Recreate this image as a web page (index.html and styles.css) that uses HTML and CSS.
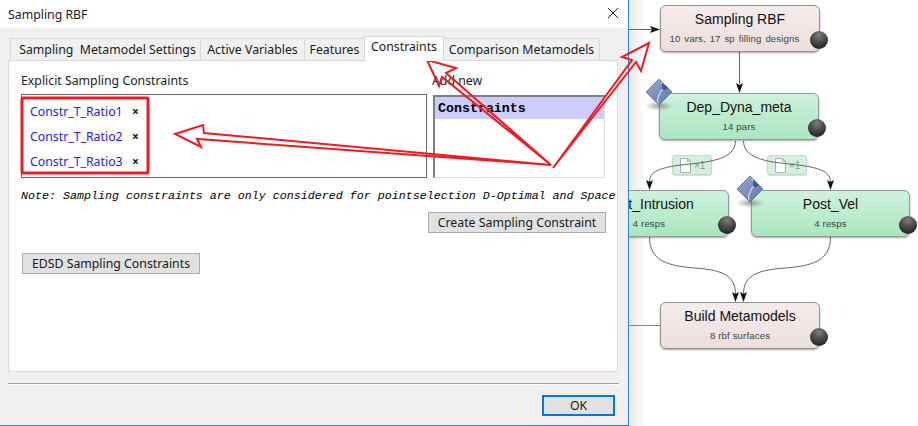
FILE: index.html
```html
<!DOCTYPE html>
<html lang="en">
<head>
<meta charset="utf-8">
<title>Sampling RBF</title>
<link rel="stylesheet" href="styles.css">
</head>
<body>
<div class="stage">
  <div class="canvas">
    <div class="edge-label label-a"><svg class="doc" viewBox="0 0 11 15"><path d="M.5.5h7l3 3v11H.5zM7.5.5v3h3" fill="#fff" stroke="#a5b5aa"/></svg><span>×1</span></div>
    <div class="edge-label label-b"><svg class="doc" viewBox="0 0 11 15"><path d="M.5.5h7l3 3v11H.5zM7.5.5v3h3" fill="#fff" stroke="#a5b5aa"/></svg><span>×1</span></div>
    <svg class="edges" viewBox="0 0 918 426">
      <g fill="none" stroke="#666">
        <path d="M0 29.5H652"/>
        <path d="M739.5 52V84"/>
        <path d="M735.5 141C735 155 722 161 690 164S649.5 172 649.5 182"/>
        <path d="M743.5 141C744 155 757 161 789 164S830.5 172 830.5 182"/>
        <path d="M649.5 237C649.5 262 670 266 695 268S735.5 274 735.5 294"/>
        <path d="M830.5 237C830.5 262 810 266 785 268S743.5 274 743.5 294"/>
        <path d="M0 325.5H660" stroke="#888"/>
      </g>
      <g fill="#111">
        <path d="M660 29.5L650 26L652 29.5L650 33z"/>
        <path d="M739.5 93L736 83L739.5 85L743 83z"/>
        <path d="M649.5 190L646 180L649.5 182L653 180z"/>
        <path d="M830.5 190L827 180L830.5 182L834 180z"/>
        <path d="M735.5 302L732 292L735.5 294L739 292z"/>
        <path d="M743.5 302L740 292L743.5 294L747 292z"/>
      </g>
    </svg>
    <div class="node node-pink n-sampling"><b>Sampling RBF</b><small class="sub-long">10 vars, 17 sp filling designs</small><i class="ball"></i></div>
    <div class="node node-green n-dep"><b>Dep_Dyna_meta</b><small>14 pars</small><i class="ball"></i></div>
    <div class="node node-green n-intrusion"><b>Post_Intrusion</b><small>4 resps</small><i class="ball"></i></div>
    <div class="node node-green n-post"><b>Post_Vel</b><small>4 resps</small><i class="ball"></i></div>
    <div class="node node-pink n-build"><b>Build Metamodels</b><small>8 rbf surfaces</small><i class="ball"></i></div>
    <svg class="diamond d-dep" viewBox="0 0 28 34"><defs><linearGradient id="dg" x1="0" y1="0" x2="1" y2="1"><stop offset="0" stop-color="#9aa9cf"/><stop offset="1" stop-color="#6076a9"/></linearGradient><radialGradient id="ds"><stop offset="0" stop-color="#666" stop-opacity=".65"/><stop offset="1" stop-color="#777" stop-opacity="0"/></radialGradient></defs><ellipse cx="14" cy="28" rx="14" ry="5" fill="url(#ds)"/><path d="M14 1L27 14 14 27 1 14z" fill="url(#dg)" stroke="#6c7ea8"/><path d="M16 4C18 7 21 9 19 11S15 12 15 15 11 18 13 25" fill="none" stroke="#cfd7ea" stroke-width="1.3"/><path d="M17 5L23 10 19 13 17 10z" fill="#3f5a96"/></svg>
    <svg class="diamond d-post" viewBox="0 0 28 34"><ellipse cx="14" cy="28" rx="14" ry="5" fill="url(#ds)"/><path d="M14 1L27 14 14 27 1 14z" fill="url(#dg)" stroke="#6c7ea8"/><path d="M16 4C18 7 21 9 19 11S15 12 15 15 11 18 13 25" fill="none" stroke="#cfd7ea" stroke-width="1.3"/><path d="M17 5L23 10 19 13 17 10z" fill="#3f5a96"/></svg>
  </div>

  <div class="dialog">
    <div class="titlebar">
      <span>Sampling RBF</span>
      <svg class="close" viewBox="0 0 10 10"><path d="M0 0L10 10M10 0L0 10" stroke="#222" fill="none"/></svg>
    </div>
    <div class="dialog-body">
      <div class="tabs">
        <div class="tab tab-first">Sampling&nbsp; Metamodel Settings</div>
        <div class="tab tab-vars">Active Variables</div>
        <div class="tab tab-features">Features</div>
        <div class="tab tab-active">Constraints</div>
        <div class="tab tab-compare">Comparison Metamodels</div>
      </div>
      <div class="pane">
        <div class="columns">
          <div class="col-left">
            <div class="heading">Explicit Sampling Constraints</div>
            <div class="list-box">
              <div class="item"><a>Constr_T_Ratio1</a><span>×</span></div>
              <div class="item"><a>Constr_T_Ratio2</a><span>×</span></div>
              <div class="item"><a>Constr_T_Ratio3</a><span>×</span></div>
            </div>
          </div>
          <div class="col-right">
            <div class="heading heading-add">Add new</div>
            <div class="table-box"><div class="table-head">Constraints</div></div>
          </div>
        </div>
        <p class="note">Note: Sampling constraints are only considered for pointselection D-Optimal and Space</p>
        <div class="create-row"><button class="btn btn-wide">Create Sampling Constraint</button></div>
        <button class="btn btn-wide btn-edsd">EDSD Sampling Constraints</button>
      </div>
      <div class="separator"></div>
      <div class="footer"><button class="btn btn-ok">OK</button></div>
    </div>
  </div>

  <svg class="annotations" viewBox="0 0 918 426">
    <g fill="none" stroke="#ed1c24" stroke-width="2">
      <rect x="22" y="98" width="126" height="75" rx="1" stroke-width="3"/>
      <path d="M551 165L204 133L203 125L175 134L201 147L197 139Z"/>
      <path d="M551 165L446 73L456 68L427 60L439 86L442 77Z"/>
      <path d="M553 168L632 60L622 57L649 43L641 71L636 62Z"/>
    </g>
  </svg>
</div>
</body>
</html>
```
FILE: styles.css
```css
* { box-sizing: border-box; }
html, body { margin: 0; padding: 0; background: #fff; }
.stage {
  position: relative;
  width: 918px;
  height: 426px;
  overflow: hidden;
  font-family: "Noto Sans", "Liberation Sans", sans-serif;
}

/* diagram canvas */
.canvas {
  position: absolute;
  inset: 0;
  background: linear-gradient(90deg, #fff 0, #fff 628px, #e9e9e9 629px, #fff 646px);
  font-family: "Liberation Sans", Arial, sans-serif;
}
.edges { position: absolute; left: 0; top: 0; width: 918px; height: 426px; }
.node {
  position: absolute;
  width: 160px;
  height: 47px;
  border: 1px solid #8f9a94;
  border-radius: 6px;
  padding-top: 5px;
  text-align: center;
  color: #111;
  box-shadow: 0 1px 2px rgba(0, 0, 0, .35);
}
.node b { display: block; font-weight: 400; font-size: 14px; line-height: 17px; }
.node small { display: block; margin-top: 5px; font-size: 9.6px; line-height: 12px; color: #444; letter-spacing: .15px; }
.node small.sub-long { padding-right: 11px; word-spacing: 1px; }
.node-pink { background: linear-gradient(#f5ecec, #ecdedd); border-color: #97908f; }
.node-green { background: linear-gradient(#d0f1dc, #a9e6c0); }
.n-sampling { left: 660px; top: 5px; }
.n-dep { left: 659px; top: 93px; }
.n-intrusion { left: 569px; top: 190px; }
.n-post { left: 751px; top: 190px; width: 159px; }
.n-build { left: 660px; top: 302px; }
.ball {
  position: absolute;
  right: -9px;
  top: 25px;
  width: 18px;
  height: 18px;
  border-radius: 50%;
  background: radial-gradient(circle at 50% 22%, #7e7e7e 0, #505050 40%, #242424 82%, #333 100%);
}
.n-dep .ball, .n-post .ball, .n-intrusion .ball { right: -8px; }
.edge-label {
  position: absolute;
  top: 155px;
  width: 40px;
  height: 20px;
  display: flex;
  align-items: center;
  gap: 3px;
  padding-left: 7px;
  background: #d4f0dd;
  border: 1px solid #bfdcc9;
  border-radius: 3px;
  box-shadow: 0 1px 1px rgba(0, 0, 0, .15);
  font-size: 10px;
  color: #8a9a90;
}
.label-a { left: 672px; }
.label-b { left: 767px; }
.doc { width: 11px; height: 15px; flex: none; }
.diamond { position: absolute; width: 28px; height: 34px; }
.d-dep { left: 645px; top: 78px; }
.d-post { left: 736px; top: 175px; }

/* dialog window */
.dialog {
  position: absolute;
  left: 0;
  top: 0;
  width: 629px;
  height: 426px;
  display: flex;
  flex-direction: column;
  background: #f0f0f0;
  border-right: 1px solid #2a86d6;
  border-bottom: 1px solid #2a7fc4;
  color: #1a1a1a;
}
.titlebar {
  height: 28px;
  flex: none;
  display: flex;
  align-items: center;
  justify-content: space-between;
  padding: 0 10px 0 8px;
  background: #fff;
  font-size: 12.3px;
}
.close { width: 10px; height: 10px; margin-bottom: 2px; }
.dialog-body { flex: 1; padding: 8px 9px 0 8px; display: flex; flex-direction: column; }
.tabs { display: flex; align-items: flex-end; height: 24px; padding-left: 2px; }
.tab {
  height: 22px;
  margin-bottom: 0;
  border: 1px solid #d9d9d9;
  border-bottom: 0;
  background: #f0f0f0;
  font-size: 12.3px;
  line-height: 21px;
  text-align: center;
  white-space: nowrap;
  margin-left: -1px;
}
.tab-first { width: 191px; margin-left: 0; padding-left: 4px; }
.tab-vars { width: 105px; }
.tab-features { width: 61px; }
.tab-active {
  width: 80px;
  height: 25px;
  margin-bottom: -1px;
  background: #fff;
  line-height: 20px;
  position: relative;
  z-index: 1;
}
.tab-compare { width: 157px; }
.pane {
  height: 312px;
  width: 610px;
  background: #fff;
  border: 1px solid #d9d9d9;
  padding: 11px 11px 0 12px;
}
.columns { display: grid; grid-template-columns: 406px 172px; column-gap: 6px; }
.heading { font-size: 12.3px; line-height: 17px; height: 22px; }
.heading-add { margin-left: -1px; }
.list-box {
  height: 84px;
  border: 1px solid #666;
  padding-top: 4px;
}
.item { height: 25px; display: flex; align-items: center; padding-left: 8px; font-size: 12.3px; }
.item a { width: 102px; color: #2222e6; }
.item span { font-weight: 700; font-size: 12px; color: #111; }
.table-box {
  height: 83px;
  margin-top: 1px;
  border: 1px solid #ddd;
  border-top: 2px solid #808080;
  border-left: 2px solid #808080;
}
.table-head {
  height: 22px;
  background: #ccccff;
  padding: 1px 0 0 3px;
  font: 700 13.3px/22px "Liberation Mono", monospace;
  color: #000;
}
.note {
  margin: 11px 0 0;
  font: italic 11.67px/14px "Liberation Mono", monospace;
  white-space: nowrap;
  color: #000;
}
.create-row { display: flex; justify-content: flex-end; margin-top: 9px; padding-right: 0; }
.btn {
  display: block;
  height: 21px;
  padding: 0;
  background: #e1e1e1;
  border: 1px solid #adadad;
  font: 12.3px/17px "Noto Sans", "Liberation Sans", sans-serif;
  color: #1a1a1a;
  text-align: center;
}
.btn-wide { width: 178px; }
.btn-edsd { margin: 20px 0 0 1px; }
.separator { height: 1px; margin-top: 11px; width: 611px; background: #a0a0a0; box-shadow: 0 1px 0 #fff; }
.footer { display: flex; justify-content: flex-end; padding: 11px 4px 0 0; }
.btn-ok { width: 73px; height: 21px; border: 2px solid #0078d7; line-height: 17px; }

/* red call-outs drawn on top */
.annotations { position: absolute; left: 0; top: 0; width: 918px; height: 426px; pointer-events: none; }
```
